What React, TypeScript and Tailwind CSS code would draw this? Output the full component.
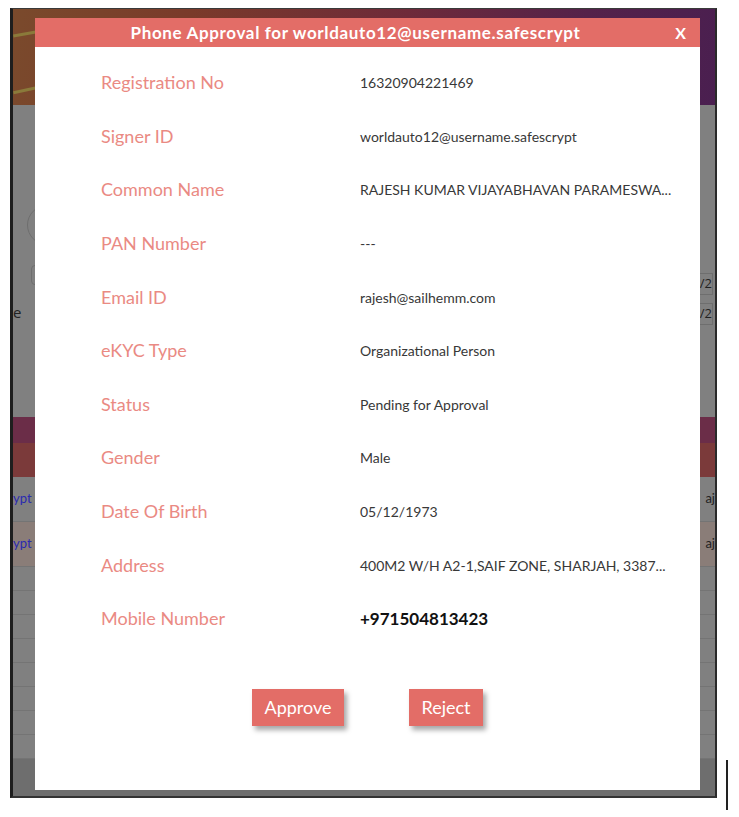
import React from "react";

const rows: { label: string; value: string; bold?: boolean }[] = [
  { label: "Registration No", value: "16320904221469" },
  { label: "Signer ID", value: "worldauto12@username.safescrypt" },
  { label: "Common Name", value: "RAJESH KUMAR VIJAYABHAVAN PARAMESWA..." },
  { label: "PAN Number", value: "---" },
  { label: "Email ID", value: "rajesh@sailhemm.com" },
  { label: "eKYC Type", value: "Organizational Person" },
  { label: "Status", value: "Pending for Approval" },
  { label: "Gender", value: "Male" },
  { label: "Date Of Birth", value: "05/12/1973" },
  { label: "Address", value: "400M2 W/H A2-1,SAIF ZONE, SHARJAH, 3387..." },
  { label: "Mobile Number", value: "+971504813423", bold: true },
];

export default function App() {
  return (
    <div
      className="relative w-[739px] h-[817px] bg-white overflow-hidden"
      style={{ fontFamily: "Lato, 'Open Sans', 'Liberation Sans', sans-serif" }}
    >
      {/* framed screenshot of page */}
      <div className="absolute left-[10px] top-[8px] w-[707px] h-[790px] border-l-[3px] border-t border-r-2 border-b-2 border-l-[#1e1e1e] border-t-[#3a3a3a] border-r-[#2a2a2a] border-b-[#333] bg-[#808080] overflow-hidden">
        {/* underlying page */}
        <div className="flex flex-col w-full h-full">
          <div className="h-[96px] bg-[linear-gradient(100deg,#7a4a2c_0%,#7a3a2a_25%,#6e2a3a_55%,#55224a_80%,#4a1f50_100%)] relative">
            <div className="absolute left-0 top-[22px] w-[40px] h-[3px] bg-[#8a7a3a] rotate-[-10deg]" />
            <div className="absolute left-0 top-[78px] w-[40px] h-[3px] bg-[#8a7a3a] rotate-[-12deg]" />
          </div>
          <div className="h-[312px] relative" style={{ fontFamily: "'Open Sans', sans-serif" }}>
            <div className="absolute left-[14px] top-[100px] w-[40px] h-[40px] rounded-full border border-[#6e6e6e]" />
            <div className="absolute left-[18px] top-[160px] w-[20px] h-[20px] rounded border border-[#6e6e6e]" />
            <div className="absolute left-[0px] top-[196px] text-[15px] text-[#222]">e</div>
            <div className="absolute left-[22px] top-[196px] w-[30px] h-[22px] rounded border border-[#6e6e6e]" />
            <div className="absolute right-[2px] top-[168px] w-[30px] h-[22px] border border-[#6e6e6e] text-[13px] text-[#222] text-right">2/2</div>
            <div className="absolute right-[2px] top-[198px] w-[30px] h-[22px] border border-[#6e6e6e] text-[13px] text-[#222] text-right">2/2</div>
          </div>
          <div className="h-[26px] bg-[#6b2d48]" />
          <div className="h-[34px] bg-[#7b3a3a]" />
          <div className="h-[45px] border-b border-[#747474] flex items-center justify-between text-[13px]">
            <span className="text-[#2a2ab0]">ypt</span>
            <span className="text-[#222]">aj</span>
          </div>
          <div className="h-[45px] bg-[#8a7d78] border-b border-[#747474] flex items-center justify-between text-[13px]">
            <span className="text-[#2a2ab0]">ypt</span>
            <span className="text-[#222]">aj</span>
          </div>
          {Array.from({ length: 8 }).map((_, i) => (
            <div key={i} className="h-[24px] border-b border-[#747474] shrink-0" />
          ))}
          <div className="flex-1 bg-[#6e6e6e] text-[13px] text-[#222] text-center pt-[6px]">
            Note : This page works in Chrome, Firefox, IE9 and above.
          </div>
        </div>

        {/* modal */}
        <div className="absolute left-[22px] top-[9px] w-[665px] h-[772px] bg-white flex flex-col">
          <div className="h-[29px] bg-[#e36d67] flex items-center justify-center relative shrink-0">
            <span className="text-white font-bold text-[17px] tracking-[0.65px] pr-[24px]">
              Phone Approval for worldauto12@username.safescrypt
            </span>
            <span className="absolute right-[14px] top-[3px] text-white font-bold text-[16px]">X</span>
          </div>
          <div className="pt-[9px] pl-[66px]">
            {rows.map((r) => (
              <div key={r.label} className="h-[53.6px] flex items-center">
                <div className="w-[259px] text-[18px] text-[#ea8a83]">{r.label}</div>
                <div
                  className={
                    r.bold
                      ? "text-[17px] font-bold text-[#111]"
                      : "text-[14px] text-[#383838]"
                  }
                >
                  {r.value}
                </div>
              </div>
            ))}
          </div>
          <div className="flex justify-center gap-[65px] mt-[43px]">
            <button className="w-[92px] h-[37px] bg-[#e36d67] text-white text-[18px] shadow-[3px_4px_5px_rgba(0,0,0,0.35)]">
              Approve
            </button>
            <button className="w-[74px] h-[37px] bg-[#e36d67] text-white text-[18px] shadow-[3px_4px_5px_rgba(0,0,0,0.35)]">
              Reject
            </button>
          </div>
        </div>
      </div>
      <div className="absolute left-[726px] top-[760px] w-[2px] h-[50px] bg-[#222]" />
    </div>
  );
}
